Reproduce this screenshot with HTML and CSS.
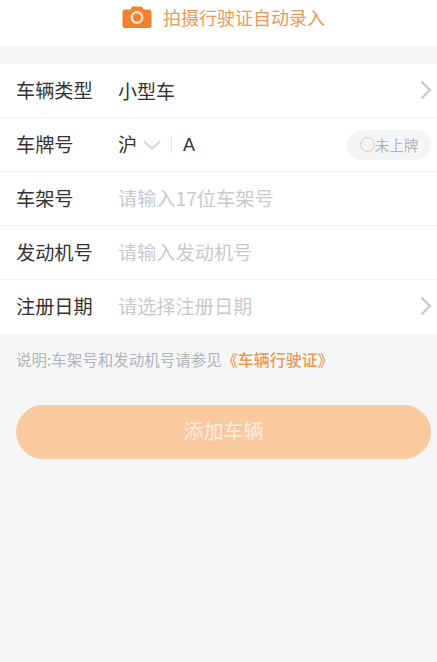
FILE: index.html
```html
<!DOCTYPE html>
<html lang="zh-CN">
<head>
    <meta charset="UTF-8">
    <meta name="viewport" content="width=device-width, initial-scale=1.0">
    <title>添加车辆</title>
    <link rel="stylesheet" href="styles.css">
</head>
<body>
    <div class="scan">
        <svg class="camera" width="30" height="24" viewBox="0 0 30 24">
            <path d="M10 1.5 h10 l1.6 3 h5.4 a2.5 2.5 0 0 1 2.5 2.5 v13.5 a2.5 2.5 0 0 1 -2.5 2.5 h-24 a2.5 2.5 0 0 1 -2.5 -2.5 v-13.5 a2.5 2.5 0 0 1 2.5 -2.5 h5.4 z" fill="#f4812f"/>
            <circle cx="15" cy="12.5" r="5.2" fill="none" stroke="#fde9d9" stroke-width="2.4"/>
        </svg>
        <span class="scan-text">拍摄行驶证自动录入</span>
    </div>

    <div class="form">
        <div class="row">
            <span class="label">车辆类型</span>
            <span class="value value-main">小型车</span>
            <svg class="arrow" width="12" height="20" viewBox="0 0 12 20"><path d="M1.5 1.5 L10 10 L1.5 18.5" fill="none" stroke="#c8c8c8" stroke-width="2"/></svg>
        </div>
        <div class="row">
            <span class="label">车牌号</span>
            <span class="value">沪</span>
            <svg class="caret" width="18" height="10" viewBox="0 0 18 10"><path d="M1 1.5 L9 8.5 L17 1.5" fill="none" stroke="#d4d4d4" stroke-width="2"/></svg>
            <span class="divider"></span>
            <span class="plate">A</span>
            <span class="no-plate"><i class="radio"></i>未上牌</span>
        </div>
        <div class="row">
            <span class="label">车架号</span>
            <span class="placeholder">请输入17位车架号</span>
        </div>
        <div class="row">
            <span class="label">发动机号</span>
            <span class="placeholder">请输入发动机号</span>
        </div>
        <div class="row">
            <span class="label">注册日期</span>
            <span class="placeholder">请选择注册日期</span>
            <svg class="arrow" width="12" height="20" viewBox="0 0 12 20"><path d="M1.5 1.5 L10 10 L1.5 18.5" fill="none" stroke="#c8c8c8" stroke-width="2"/></svg>
        </div>
    </div>

    <p class="note">说明:车架号和发动机号请参见<span class="note-link">《车辆行驶证》</span></p>

    <div class="submit">添加车辆</div>
</body>
</html>
```

FILE: styles.css
```css
* {
    box-sizing: border-box;
}
html, body {
    margin: 0;
    height: 100%;
}
body {
    background: #f5f6f8;
    font-family: "Noto Sans CJK SC", "Liberation Sans", sans-serif;
    color: #333;
}
.scan {
    height: 46px;
    padding: 0 0 13px 10px;
    background: #fff;
    display: flex;
    justify-content: center;
    align-items: center;
    gap: 11px;
}
.scan-text {
    font-size: 18px;
    color: #ea9a5c;
}
.form {
    margin-top: 18px;
    background: #fff;
}
.row {
    height: 54px;
    padding: 0 5px 2px 16px;
    display: flex;
    align-items: center;
    border-bottom: 1px solid #f2f2f4;
}
.row:last-child {
    border-bottom: none;
}
.label {
    width: 102px;
    font-size: 19.2px;
}
.value {
    font-size: 19px;
}
.value-main {
    padding-top: 2px;
}
.placeholder {
    font-size: 19.2px;
    color: #c9c9cb;
}
.arrow {
    margin-left: auto;
}
.caret {
    margin: 3px 0 0 6px;
}
.divider {
    width: 1px;
    height: 16px;
    margin: 2px 11px 0 10px;
    background: #e2e2e2;
}
.plate {
    padding-top: 3px;
    font-size: 18px;
    font-family: "Liberation Sans", sans-serif;
}
.no-plate {
    margin: 2px 1px 0 auto;
    height: 30px;
    width: 84px;
    border-radius: 15px;
    background: #f4f5f7;
    font-size: 14.5px;
    color: #b5b5b5;
    display: flex;
    align-items: center;
    justify-content: center;
}
.radio {
    width: 15px;
    height: 15px;
    border: 1px solid #cfcfcf;
    border-radius: 50%;
}
.note {
    margin: 13px 16px 0;
    font-size: 15.5px;
    color: #b4b4b6;
}
.note-link {
    font-size: 16px;
    font-weight: 500;
    color: #ea9a4f;
}
.submit {
    margin: 34px 6px 0 16px;
    height: 54px;
    padding-bottom: 4px;
    border-radius: 27px;
    background: #f9c9a0;
    color: #fdeee0;
    font-size: 20px;
    display: flex;
    align-items: center;
    justify-content: center;
}
```
